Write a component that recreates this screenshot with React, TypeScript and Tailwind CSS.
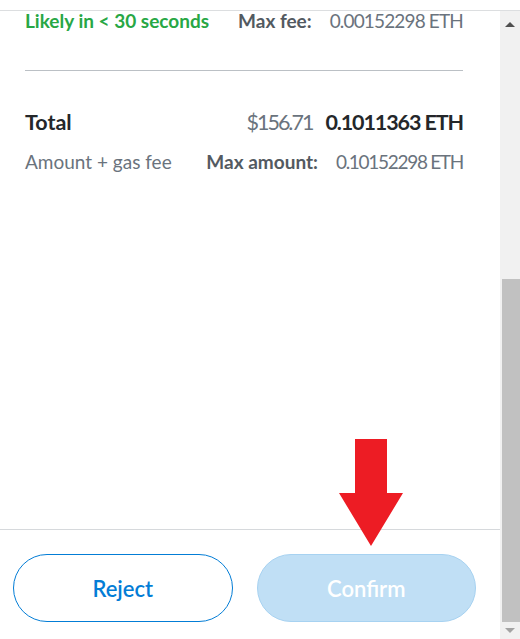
import React from 'react';

const font = { fontFamily: 'Lato, "Noto Sans", sans-serif' };

const ScrollBar: React.FC = () => (
  <div className="w-[20px] bg-[#f1f1f1] flex flex-col items-stretch">
    {/* up arrow */}
    <div className="h-[268px] flex justify-center pt-[11px]">
      <div className="w-0 h-0 border-l-[5px] border-r-[5px] border-b-[5px] border-l-transparent border-r-transparent border-b-[#505050]" />
    </div>
    {/* thumb */}
    <div className="ml-[2px] h-[343px] bg-[#c1c1c1]" />
    {/* down arrow */}
    <div className="flex-1 flex justify-center pt-[6px]">
      <div className="w-0 h-0 border-l-[5px] border-r-[5px] border-t-[5px] border-l-transparent border-r-transparent border-t-[#a3a3a3]" />
    </div>
  </div>
);

const RedArrow: React.FC = () => (
  <svg
    className="absolute left-[339px] top-[439px]"
    width="64"
    height="108"
    viewBox="0 0 64 108"
  >
    <path d="M16 0 H48 V54 H64 L32 107 L0 54 H16 Z" fill="#ed1c24" />
  </svg>
);

export default function App() {
  return (
    <div className="relative w-[520px] h-[639px] bg-white flex flex-col overflow-hidden" style={font}>
      <div className="h-[11px] border-b border-[#dcdee0]" />
      <div className="flex-1 flex">
        <div className="flex-1 flex flex-col">
          {/* Details */}
          <div className="flex-1 pl-[25px] pr-[37px]">
            <div className="flex items-center justify-between leading-[22px] -mt-[1px]">
              <span className="text-[19px] font-bold text-[#28a745]">Likely in &lt; 30 seconds</span>
              <span className="text-[19px]">
                <span className="font-bold text-[#535a61]">Max fee:</span>
                <span className="ml-[18px] text-[#6a737d] tracking-[-0.85px]">0.00152298 ETH</span>
              </span>
            </div>
            <div className="mt-[38px] h-px bg-[#bbc0c5]" />
            <div className="mt-[37px] flex items-center justify-between leading-[28px]">
              <span className="text-[21.5px] font-bold text-[#24272a]">Total</span>
              <span className="text-[21.5px]">
                <span className="text-[#6a737d] tracking-[-2px]">$156.71</span>
                <span className="ml-[13px] font-bold text-[#24272a] tracking-[-1.1px]">0.1011363 ETH</span>
              </span>
            </div>
            <div className="mt-[14px] flex items-center justify-between leading-[24px]">
              <span className="text-[19px] text-[#6a737d]">Amount + gas fee</span>
              <span className="text-[19px]">
                <span className="font-bold text-[#535a61]">Max amount:</span>
                <span className="ml-[18px] text-[#6a737d] tracking-[-1.3px]">0.10152298 ETH</span>
              </span>
            </div>
          </div>

          {/* Footer */}
          <div className="h-[110px] border-t border-[#d6d9dc] flex gap-[24px] pl-[13px] pr-[24px] pt-[24px]">
            <button className="flex-1 h-[68px] rounded-full border border-[#037dd6] text-[#037dd6] text-[22px] font-semibold">
              Reject
            </button>
            <button className="flex-1 h-[68px] rounded-full border border-[#a7d2f1] bg-[#c0dff5] text-white text-[22px] font-semibold">
              Confirm
            </button>
          </div>
        </div>
        <ScrollBar />
      </div>
      <RedArrow />
    </div>
  );
}
